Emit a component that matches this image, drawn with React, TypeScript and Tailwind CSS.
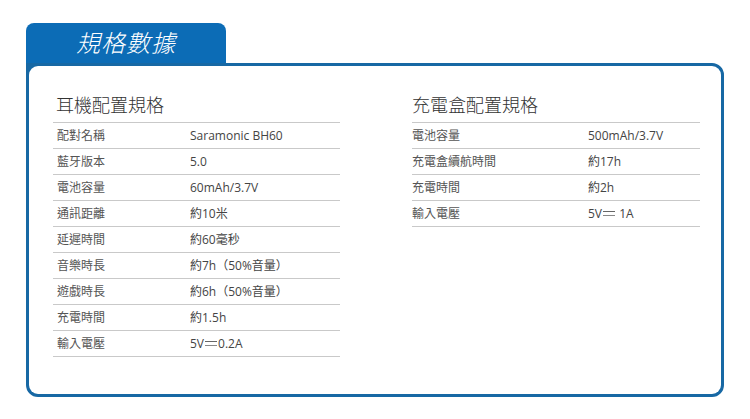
import React from "react";

function DC() {
  return (
    <span className="inline-flex flex-col justify-between w-[12px] h-[5px] mx-[1px] align-middle relative -top-[1px]">
      <span className="block h-px bg-[#666]" />
      <span className="block h-px bg-[#888]" />
    </span>
  );
}

const left: [string, React.ReactNode][] = [
  ["配對名稱", "Saramonic BH60"],
  ["藍牙版本", "5.0"],
  ["電池容量", "60mAh/3.7V"],
  ["通訊距離", "約10米"],
  ["延遲時間", "約60毫秒"],
  ["音樂時長", "約7h（50%音量）"],
  ["遊戲時長", "約6h（50%音量）"],
  ["充電時間", "約1.5h"],
  ["輸入電壓", <>5V<DC />0.2A</>],
];

const right: [string, React.ReactNode][] = [
  ["電池容量", "500mAh/3.7V"],
  ["充電盒續航時間", "約17h"],
  ["充電時間", "約2h"],
  ["輸入電壓", <>5V<DC /> 1A</>],
];

function Table({
  title,
  rows,
  valueOffset,
  labelPad,
  headPad,
}: {
  title: string;
  rows: [string, React.ReactNode][];
  valueOffset: string;
  labelPad: string;
  headPad: string;
}) {
  return (
    <div className="flex flex-col">
      <div
        className={`text-[18px] leading-[24px] font-light text-[#333] pb-[5px] border-b border-[#c9c9c9] ${headPad}`}
      >
        {title}
      </div>
      {rows.map(([k, v]) => (
        <div
          key={k}
          className="flex h-[26px] items-center border-b border-[#c9c9c9] text-[12px] text-[#555]"
        >
          <div className={`${valueOffset} ${labelPad} shrink-0`}>{k}</div>
          <div className="text-[#444]">{v}</div>
        </div>
      ))}
    </div>
  );
}

export default function App() {
  return (
    <div
      className="w-[750px] h-[419px] bg-white pl-[26px] pt-[23px]"
      style={{ fontFamily: '"Open Sans", "Noto Sans CJK TC", sans-serif' }}
    >
      <div className="w-[200px] h-[40px] bg-[#0c6cb6] rounded-t-[8px] flex items-center justify-center">
        <span className="text-white text-[24px] italic font-light leading-none tracking-[1px]">
          規格數據
        </span>
      </div>
      <div className="w-[698px] h-[334px] border-[3px] border-[#1768a4] bg-[#1768a4] rounded-[12px] rounded-tl-none">
        <div className="w-full h-full bg-white rounded-[9px] pl-[24px] pt-[27px] flex gap-[72px]">
          <div className="w-[287px]">
            <Table
              title="耳機配置規格"
              rows={left}
              valueOffset="w-[137px]"
              labelPad="pl-[4px]"
              headPad="pl-[3px]"
            />
          </div>
          <div className="w-[288px]">
            <Table
              title="充電盒配置規格"
              rows={right}
              valueOffset="w-[176px]"
              labelPad=""
              headPad=""
            />
          </div>
        </div>
      </div>
    </div>
  );
}
